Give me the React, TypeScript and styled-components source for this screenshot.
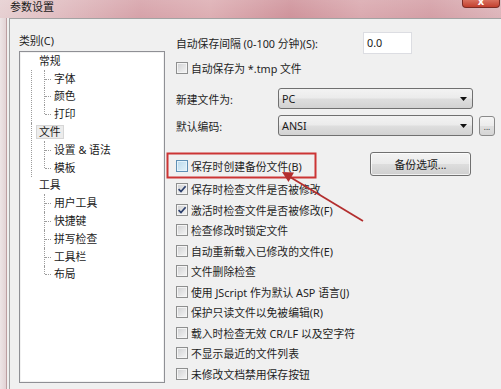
import React from 'react'
import styled, { createGlobalStyle } from 'styled-components'

const GlobalStyle = createGlobalStyle`
	* {
		box-sizing: border-box;
	}
	html, body {
		margin: 0;
		padding: 0;
		background: #f0f0f0;
	}
	body {
		font-family: 'Noto Sans', 'Noto Sans CJK SC', sans-serif;
		font-size: 10.8px;
		color: #1e1e1e;
	}
`

const Window = styled.div`
	position: relative;
	width: 501px;
	height: 389px;
	overflow: hidden;
	display: flex;
	flex-direction: column;
	background: #f0f0f0;
`

const TitleBar = styled.div`
	height: 18px;
	flex: 0 0 18px;
	display: flex;
	align-items: flex-start;
	justify-content: space-between;
	background: linear-gradient(180deg, rgba(255, 255, 255, 0.12) 0%, rgba(255, 255, 255, 0) 100%),
		linear-gradient(
			90deg,
			#e6cfd1 0%,
			#e0bcc0 12%,
			#d6a2a9 28%,
			#ddaeb3 42%,
			#cf939b 58%,
			#daa9af 72%,
			#d49fa6 86%,
			#ddb5ba 100%
		);
`

const Title = styled.div`
	padding-left: 10px;
	line-height: 14px;
	font-size: 11px;
	color: #1a1a1a;
`

const CloseButton = styled.div`
	width: 38px;
	height: 8px;
	margin-right: 1px;
	border: 1px solid #7d2b24;
	border-top: none;
	border-radius: 0 0 4px 4px;
	background: linear-gradient(180deg, #d9705f 0%, #c2402f 100%);
	color: #fff;
	font-weight: bold;
	font-size: 11px;
	line-height: 2px;
	text-align: center;
	overflow: hidden;
`

const Body = styled.div`
	flex: 1;
	display: flex;
`

const Frame = styled.div`
	width: 7px;
	flex: 0 0 7px;
	background: linear-gradient(90deg, #ede5e6 0%, #e2d3d5 100%);
	border-right: 1px solid #bc9fa2;
`

const Client = styled.div`
	flex: 1;
	margin-left: 2px;
	border-top: 1px solid #a3a3a3;
	border-left: 1px solid #a3a3a3;
	display: grid;
	grid-template-columns: 146px 1fr;
	column-gap: 11px;
	align-items: start;
	padding: 13px 0 0 9px;
`

const CategoryColumn = styled.div`
	display: flex;
	flex-direction: column;
`

const Caption = styled.div`
	margin-top: 2px;
	line-height: 14px;
	height: 14px;
`

const TreeBox = styled.div`
	margin-top: 3px;
	height: 332px;
	background: #fff;
	border: 1px solid #8f9095;
	box-shadow: inset 0 0 0 1px #f2f2f2;
`

type BranchProps = {
	$trunk?: 'head' | 'full',
}

const Branch = styled.div<BranchProps>`
	position: relative;
	&::before {
		content: '';
		display: ${(p) => (p.$trunk ? 'block' : 'none')};
		position: absolute;
		left: 11px;
		top: ${(p) => (p.$trunk === 'head' ? '17.8px' : '0')};
		bottom: 0;
		border-left: 1px dotted #9c9c9c;
	}
`

type NodeRowProps = {
	$level: number,
	$last?: boolean,
}

const NodeRow = styled.div<NodeRowProps>`
	position: relative;
	height: 17.8px;
	display: flex;
	align-items: center;
	padding-left: ${(p) => (p.$level === 0 ? 16 : 31)}px;
	white-space: nowrap;
	&::before {
		content: '';
		display: ${(p) => (p.$level === 0 ? 'none' : 'block')};
		position: absolute;
		left: 24px;
		top: 0;
		bottom: ${(p) => (p.$last ? '50%' : '0')};
		border-left: 1px dotted #9c9c9c;
	}
	&::after {
		content: '';
		display: ${(p) => (p.$level === 0 ? 'none' : 'block')};
		position: absolute;
		left: 25px;
		top: 50%;
		width: 6px;
		border-top: 1px dotted #9c9c9c;
	}
`

const NodeLabel = styled.span<{ $selected?: boolean }>`
	padding: 0 2px;
	line-height: 12px;
	border: 1px solid ${(p) => (p.$selected ? '#d6d6d6' : 'transparent')};
	background: ${(p) => (p.$selected ? '#ececec' : 'transparent')};
	color: #1a1a1a;
`

const Options = styled.div`
	display: flex;
	flex-direction: column;
`

type RowProps = {
	$top: number,
	$height: number,
}

const Row = styled.div<RowProps>`
	display: flex;
	align-items: center;
	margin-top: ${(p) => p.$top}px;
	height: ${(p) => p.$height}px;
	white-space: nowrap;
`

const FieldLabel = styled.span<{ $width: number }>`
	flex: 0 0 ${(p) => p.$width}px;
`

const NumberInput = styled.div`
	width: 49px;
	height: 22px;
	background: #fff;
	border: 1px solid #dcdde2;
	padding-left: 3px;
	line-height: 20px;
	color: #1a1a1a;
`

const Select = styled.div`
	width: 195px;
	height: 21px;
	display: flex;
	align-items: center;
	justify-content: space-between;
	padding: 0 5px 0 3px;
	border: 1px solid #707070;
	border-radius: 3px;
	background: linear-gradient(180deg, #f3f3f3 0%, #ebebeb 48%, #dedede 52%, #d2d2d2 100%);
	color: #1a1a1a;
`

const SmallButton = styled.div`
	width: 16px;
	height: 20px;
	margin-left: 6px;
	border: 1px solid #8a8a8a;
	border-radius: 3px;
	background: linear-gradient(180deg, #f5f5f5 0%, #ececec 48%, #dfdfdf 52%, #d5d5d5 100%);
	font-size: 8px;
	line-height: 20px;
	text-align: center;
	color: #333;
`

const PushButton = styled.div`
	width: 101px;
	height: 24px;
	margin-left: auto;
	margin-right: 30px;
	border: 1px solid #707070;
	border-radius: 3px;
	background: linear-gradient(180deg, #f3f3f3 0%, #ebebeb 48%, #dddddd 52%, #cfcfcf 100%);
	box-shadow: inset 0 0 0 1px rgba(255, 255, 255, 0.7);
	display: flex;
	align-items: center;
	justify-content: center;
	color: #1a1a1a;
`

const CheckRow = styled.label<{ $shift?: number }>`
	display: flex;
	align-items: center;
	gap: 3px;
	height: 16px;
	margin-top: ${(p) => p.$shift || 0}px;
	white-space: nowrap;
`

type BoxProps = {
	$hover?: boolean,
}

const Box = styled.span<BoxProps>`
	width: 12px;
	height: 12px;
	flex: 0 0 12px;
	display: flex;
	align-items: center;
	justify-content: center;
	border: 1px solid ${(p) => (p.$hover ? '#5f8fb5' : '#8e8f8f')};
	box-shadow: inset 0 0 0 1px ${(p) => (p.$hover ? '#e4f3fb' : '#f4f4f4')};
	background: ${(p) =>
		p.$hover
			? 'linear-gradient(135deg, #b9d9ec 0%, #e3f2fa 100%)'
			: 'linear-gradient(135deg, #cfd0d2 0%, #f6f6f6 100%)'};
`

const CheckList = styled.div`
	margin-top: 2.75px;
	display: flex;
	flex-direction: column;
`

const ListRow = styled.div`
	height: 20.5px;
	display: flex;
	align-items: center;
`

const Overlay = styled.svg`
	position: absolute;
	left: 0;
	top: 0;
	pointer-events: none;
`

type TreeNode = {
	label: string,
	trunk?: 'head' | 'full',
	selected?: boolean,
	children: string[],
}

const tree: TreeNode[] = [
	{ label: '常规', trunk: 'head', children: ['字体', '颜色', '打印'] },
	{ label: '文件', trunk: 'full', selected: true, children: ['设置 & 语法', '模板'] },
	{ label: '工具', children: ['用户工具', '快捷键', '拼写检查', '工具栏', '布局'] },
]

const checks = [
	{ label: '保存时检查文件是否被修改', checked: true },
	{ label: '激活时检查文件是否被修改(F)', checked: true },
	{ label: '检查修改时锁定文件' },
	{ label: '自动重新载入已修改的文件(E)' },
	{ label: '文件删除检查' },
	{ label: '使用 JScript 作为默认 ASP 语言(J)' },
	{ label: '保护只读文件以免被编辑(R)' },
	{ label: '载入时检查无效 CR/LF 以及空字符' },
	{ label: '不显示最近的文件列表' },
	{ label: '未修改文档禁用保存按钮' },
]

const Caret = () => (
	<svg width="7" height="4" viewBox="0 0 7 4">
		<polygon points="0,0 7,0 3.5,4" fill="#111" />
	</svg>
)

type CheckboxProps = {
	label: string,
	checked?: boolean,
	hover?: boolean,
	shift?: number,
}

const Checkbox: React.FC<CheckboxProps> = ({ label, checked, hover, shift }) => (
	<CheckRow $shift={shift}>
		<Box $hover={hover}>
			{checked && (
				<svg width="10" height="10" viewBox="0 0 10 10">
					<path d="M1.6 5.2 L4 7.6 L8.6 2.2" fill="none" stroke="#2c3f6c" strokeWidth="1.7" />
				</svg>
			)}
		</Box>
		<span>{label}</span>
	</CheckRow>
)

export default function App() {
	return (
		<>
			<GlobalStyle />
			<Window>
				<TitleBar>
					<Title>参数设置</Title>
					<CloseButton>x</CloseButton>
				</TitleBar>
				<Body>
					<Frame />
					<Client>
						<CategoryColumn>
							<Caption>类别(C)</Caption>
							<TreeBox>
								{tree.map((node) => (
									<Branch key={node.label} $trunk={node.trunk}>
										<NodeRow $level={0}>
											<NodeLabel $selected={node.selected}>{node.label}</NodeLabel>
										</NodeRow>
										{node.children.map((child, i) => (
											<NodeRow key={child} $level={1} $last={i === node.children.length - 1}>
												<NodeLabel>{child}</NodeLabel>
											</NodeRow>
										))}
									</Branch>
								))}
							</TreeBox>
						</CategoryColumn>
						<Options>
							<Row $top={0} $height={22}>
								<FieldLabel $width={187}>自动保存间隔 (0-100 分钟)(S):</FieldLabel>
								<NumberInput>0.0</NumberInput>
							</Row>
							<Row $top={6} $height={16}>
								<Checkbox label="自动保存为 *.tmp 文件" />
							</Row>
							<Row $top={12} $height={21}>
								<FieldLabel $width={102}>新建文件为:</FieldLabel>
								<Select>
									<span>PC</span>
									<Caret />
								</Select>
							</Row>
							<Row $top={6} $height={21}>
								<FieldLabel $width={102}>默认编码:</FieldLabel>
								<Select>
									<span>ANSI</span>
									<Caret />
								</Select>
								<SmallButton>...</SmallButton>
							</Row>
							<Row $top={16} $height={24}>
								<Checkbox label="保存时创建备份文件(B)" hover shift={4} />
								<PushButton>备份选项...</PushButton>
							</Row>
							<CheckList>
								{checks.map((c) => (
									<ListRow key={c.label}>
										<Checkbox label={c.label} checked={c.checked} />
									</ListRow>
								))}
							</CheckList>
						</Options>
					</Client>
				</Body>
				<Overlay width="501" height="389" viewBox="0 0 501 389">
					<rect x="167.5" y="153.5" width="148" height="24" fill="none" stroke="#cc3535" strokeWidth="2" />
					<line x1="363" y1="221" x2="290" y2="177" stroke="#b32e2e" strokeWidth="1.8" />
					<polygon points="282,172 294,172.5 288.5,182" fill="#b32e2e" />
				</Overlay>
			</Window>
		</>
	)
}
